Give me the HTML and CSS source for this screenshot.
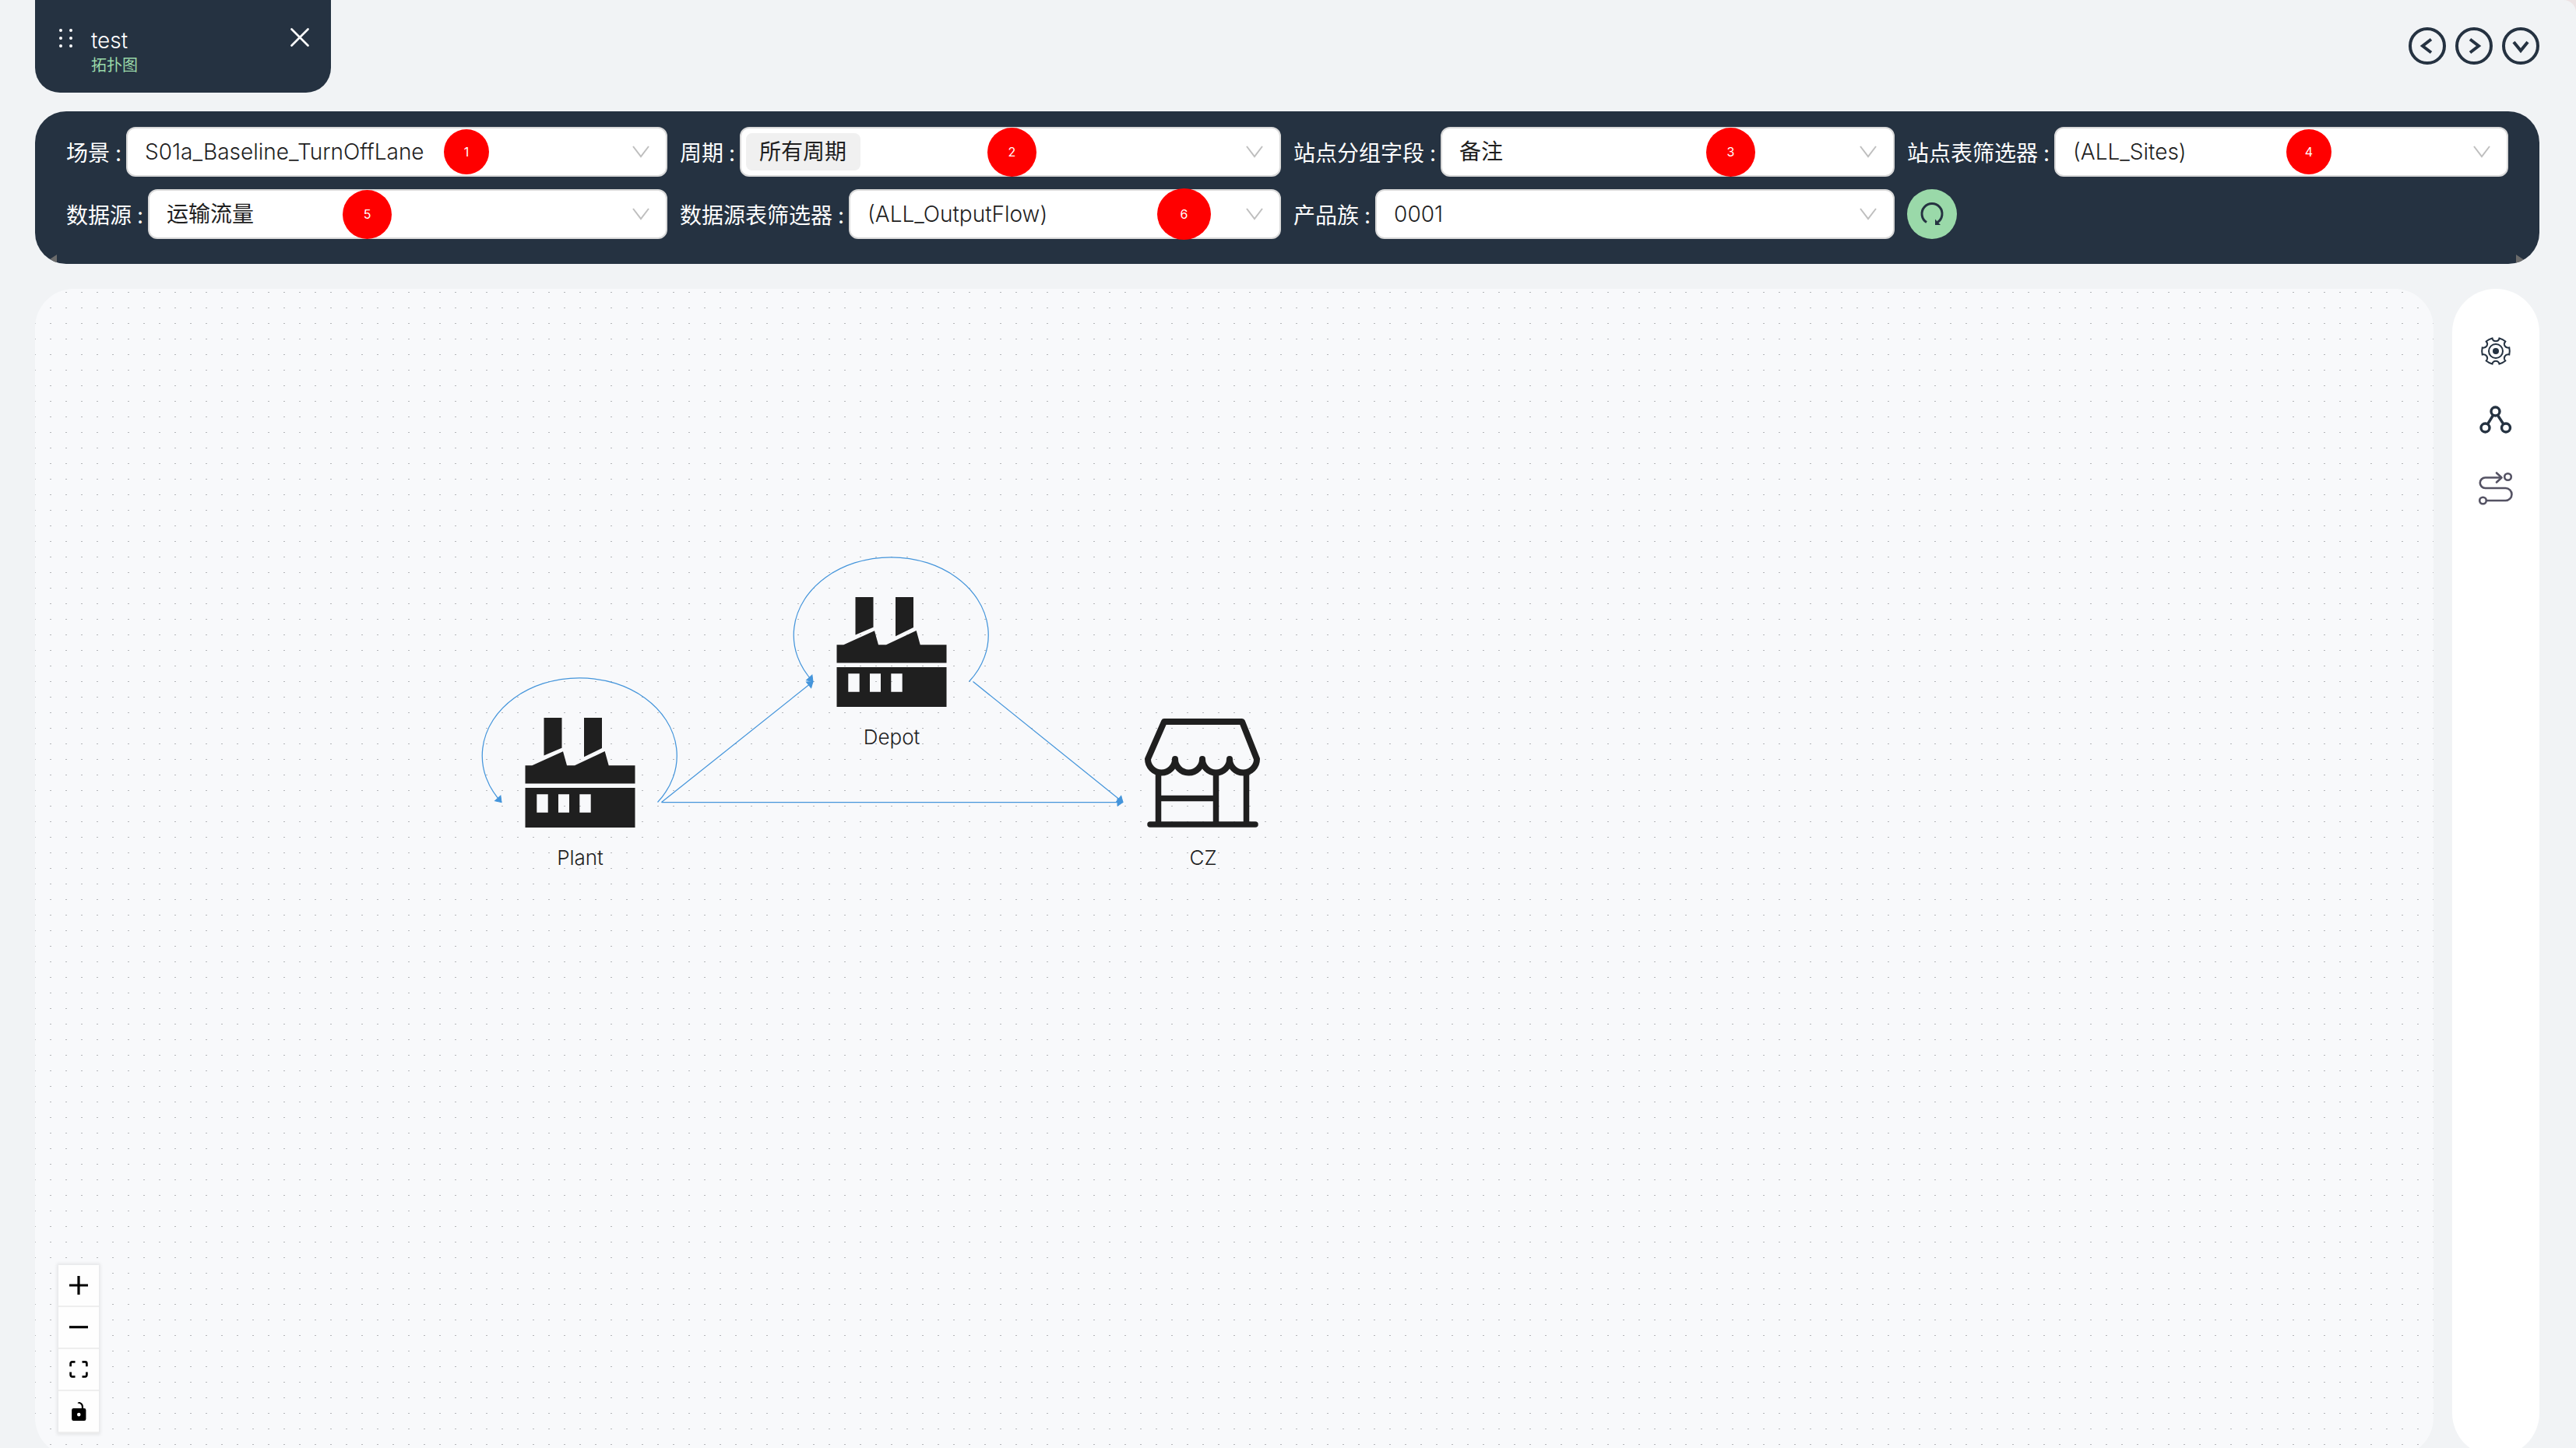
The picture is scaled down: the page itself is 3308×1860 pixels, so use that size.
FILE: index.html
```
<!DOCTYPE html>
<html lang="zh-CN">
<head>
    <meta charset="UTF-8">
    <title>test - 拓扑图</title>
    <link rel="stylesheet" href="styles.css">
</head>
<body>
    <div class="app">
        <header class="header">
            <div class="tab">
                <svg class="tab-drag" viewBox="0 0 20 26" width="20" height="26" fill="#fff">
                    <circle cx="3" cy="3" r="2"/><circle cx="16" cy="3" r="2"/>
                    <circle cx="3" cy="13" r="2"/><circle cx="16" cy="13" r="2"/>
                    <circle cx="3" cy="23" r="2"/><circle cx="16" cy="23" r="2"/>
                </svg>
                <div class="tab-text">
                    <div class="tab-title">test</div>
                    <div class="tab-sub">拓扑图</div>
                </div>
                <button class="tab-close" aria-label="关闭">
                    <svg viewBox="0 0 24 24" width="24" height="24" fill="none" stroke="#fff" stroke-width="2.6" stroke-linecap="round"><path d="M1.5 1.5 22.5 22.5M22.5 1.5 1.5 22.5"/></svg>
                </button>
            </div>
            <nav class="nav">
                <button aria-label="上一个"><svg viewBox="0 0 48 48" width="48" height="48"><circle cx="24" cy="24" r="22"/><path d="M29 15.5 18 24l11 8.5"/></svg></button>
                <button aria-label="下一个"><svg viewBox="0 0 48 48" width="48" height="48"><circle cx="24" cy="24" r="22"/><path d="M19 15.5 30 24l-11 8.5"/></svg></button>
                <button aria-label="展开"><svg viewBox="0 0 48 48" width="48" height="48"><circle cx="24" cy="24" r="22"/><path d="M15 19l9 11 9-11"/></svg></button>
            </nav>
        </header>

        <section class="toolbar">
            <div class="field">
                <label for="scene">场景</label>
                <div class="box">
                    <select id="scene"><option>S01a_Baseline_TurnOffLane</option></select>
                    <svg class="arrow" viewBox="0 0 24 24"><path d="M2 5l10 13L22 5"/></svg>
                </div>
                <span class="badge b1">1</span>
            </div>
            <div class="field">
                <label for="period">周期</label>
                <div class="box box-tag">
                    <select id="period" class="zh"><option>所有周期</option></select>
                    <svg class="arrow" viewBox="0 0 24 24"><path d="M2 5l10 13L22 5"/></svg>
                </div>
                <span class="badge b2">2</span>
            </div>
            <div class="field">
                <label for="group">站点分组字段</label>
                <div class="box">
                    <select id="group" class="zh"><option>备注</option></select>
                    <svg class="arrow" viewBox="0 0 24 24"><path d="M2 5l10 13L22 5"/></svg>
                </div>
                <span class="badge b3">3</span>
            </div>
            <div class="field">
                <label for="sites">站点表筛选器</label>
                <div class="box">
                    <select id="sites"><option>(ALL_Sites)</option></select>
                    <svg class="arrow" viewBox="0 0 24 24"><path d="M2 5l10 13L22 5"/></svg>
                </div>
                <span class="badge b4">4</span>
            </div>
            <div class="field">
                <label for="source">数据源</label>
                <div class="box">
                    <select id="source" class="zh"><option>运输流量</option></select>
                    <svg class="arrow" viewBox="0 0 24 24"><path d="M2 5l10 13L22 5"/></svg>
                </div>
                <span class="badge b5">5</span>
            </div>
            <div class="field">
                <label for="filter">数据源表筛选器</label>
                <div class="box">
                    <select id="filter"><option>(ALL_OutputFlow)</option></select>
                    <svg class="arrow" viewBox="0 0 24 24"><path d="M2 5l10 13L22 5"/></svg>
                </div>
                <span class="badge b6">6</span>
            </div>
            <div class="field">
                <label for="family">产品族</label>
                <div class="box">
                    <select id="family"><option>0001</option></select>
                    <svg class="arrow" viewBox="0 0 24 24"><path d="M2 5l10 13L22 5"/></svg>
                </div>
            </div>
            <button class="refresh" aria-label="刷新">
                <svg viewBox="0 0 32 32" width="32" height="32"><path d="M9 26.500A13 13 0 1 1 23 26.500" fill="none" stroke="#253241" stroke-width="3"/><path d="M20 22.500V30h7z" fill="#253241"/></svg>
            </button>
            <i class="scroll-left"></i>
            <i class="scroll-right"></i>
        </section>

        <main class="main">
            <div class="canvas">
                <svg class="edges">
                    <defs>
                        <pattern id="dots" x="19" y="4" width="20" height="20" patternUnits="userSpaceOnUse">
                            <rect width="2" height="1" fill="#b4b6b9"/>
                        </pattern>
                        <marker id="tip" markerUnits="userSpaceOnUse" markerWidth="14" markerHeight="16" refX="8" refY="7" orient="auto">
                            <path d="M1 2 8 7 1 12z" fill="#4495db" stroke="#4495db"/>
                        </marker>
                    </defs>
                    <rect width="100%" height="100%" fill="url(#dots)"/>
                    <g fill="none" stroke="#4495db" stroke-width="1.25">
                        <path d="M799.500 659.500A125 100 0 1 0 599 659.500" marker-end="url(#tip)"/>
                        <path d="M1199.500 504.500A125 100 0 1 0 999 504.500" marker-end="url(#tip)"/>
                        <path d="M804.500 659.500 999 504.500" marker-end="url(#tip)"/>
                        <path d="M804.500 659.500H1397" marker-end="url(#tip)"/>
                        <path d="M1204.500 504.500 1397 659.500" marker-end="url(#tip)"/>
                    </g>
                </svg>

                <div class="node plant">
                    <svg viewBox="0 0 160 142" width="160" height="142" fill="#1f1f1f">
                        <path d="M33.500 0h23v38.700l-23 9.800zM85 0h23v39L85 50.300z"/>
                        <path d="M9.500 61.300h8.800L58 43.300l5 18h10L111.700 43l5 18.300h33.800v23.200H9.500z"/>
                        <path fill-rule="evenodd" d="M9.500 90h141v51H9.500zM24.300 98.300v23.400h14.400V98.300zM52 98.300v23.400h14V98.300zM79.300 98.300v23.400h14.400V98.300z"/>
                    </svg>
                    <span>Plant</span>
                </div>
                <div class="node depot">
                    <svg viewBox="0 0 160 142" width="160" height="142" fill="#1f1f1f">
                        <path d="M33.500 0h23v38.700l-23 9.800zM85 0h23v39L85 50.300z"/>
                        <path d="M9.500 61.300h8.800L58 43.300l5 18h10L111.700 43l5 18.300h33.800v23.200H9.500z"/>
                        <path fill-rule="evenodd" d="M9.500 90h141v51H9.500zM24.300 98.300v23.400h14.400V98.300zM52 98.300v23.400h14V98.300zM79.300 98.300v23.400h14.400V98.300z"/>
                    </svg>
                    <span>Depot</span>
                </div>
                <div class="node cz">
                    <svg viewBox="0 0 160 142" width="160" height="142" fill="none" stroke="#1f1f1f" stroke-width="8" stroke-linecap="round" stroke-linejoin="round">
                        <path d="M9 53 30 5h100l19 48a17.500 17.500 0 0 1-35 0 17.500 17.500 0 0 1-35 0 17.500 17.500 0 0 1-35 0 17.500 17.500 0 0 1-35 0z"/>
                        <path d="M22.500 71v65M96.500 71v65M135.500 71v65M22.500 103.500h74M12 137h135" stroke-width="7.500"/>
                    </svg>
                    <span>CZ</span>
                </div>

                <div class="controls">
                    <button aria-label="放大"><svg viewBox="0 0 32 32" width="24" height="24"><path d="M32 18.133H18.133V32h-4.266V18.133H0v-4.266h13.867V0h4.266v13.867H32z"/></svg></button>
                    <button aria-label="缩小"><svg viewBox="0 0 32 5" width="24" height="4"><path d="M0 0h32v4.200H0z"/></svg></button>
                    <button aria-label="适应画布"><svg viewBox="0 0 32 30" width="24" height="22"><path d="M3.692 4.630c0-.530.400-.938.939-.938h5.215V0H4.708C2.130 0 0 2.054 0 4.630v5.216h3.692V4.631zM27.354 0h-5.200v3.692h5.170c.530 0 .984.400.984.939v5.215H32V4.631A4.624 4.624 0 0027.354 0zm.954 24.830c0 .532-.400.940-.939.940h-5.215v3.768h5.215c2.577 0 4.631-2.130 4.631-4.707v-5.139h-3.692v5.139zm-23.677.940c-.531 0-.939-.400-.939-.940v-5.138H0v5.139c0 2.577 2.130 4.707 4.708 4.707h5.138V25.770H4.631z"/></svg></button>
                    <button aria-label="锁定"><svg viewBox="0 0 25 32" width="19" height="24"><path d="M21.333 10.667H19.810V7.619C19.810 3.429 16.380 0 12.190 0c-4.114 1.828-1.370 2.133.305 2.438 1.676.305 4.420 2.590 4.420 5.181v3.048H3.047A3.056 3.056 0 000 13.714v15.238A3.056 3.056 0 003.048 32h18.285a3.056 3.056 0 003.048-3.048V13.714a3.056 3.056 0 00-3.048-3.047zM12.190 24.533a3.056 3.056 0 01-3.047-3.047 3.056 3.056 0 013.047-3.048 3.056 3.056 0 013.048 3.048 3.056 3.056 0 01-3.048 3.047z"/></svg></button>
                </div>
            </div>

            <aside class="side">
                <button aria-label="设置">
                    <svg viewBox="0 0 44 44" width="44" height="44" fill="none" stroke="#253241" stroke-width="2">
                        <path d="M17.500 5.500C18.500 10.500 25.500 10.500 26.500 5.500Q31 6.800 34.300 9.500C31 13.500 34 18.500 39.300 17.500Q40.300 22 39.300 26.500C34 25.500 31 30.500 34.300 34.500Q31 37.200 26.500 38.500C25.500 33.500 18.500 33.500 17.500 38.500Q13 37.200 9.700 34.500C13 30.500 10 25.500 4.700 26.500Q3.700 22 4.700 17.500C10 18.500 13 13.500 9.700 9.500Q13 6.800 17.500 5.500z"/>
                        <circle cx="22" cy="22" r="9"/>
                        <circle cx="22" cy="22" r="4" fill="#253241" stroke="none"/>
                    </svg>
                </button>
                <button aria-label="网络">
                    <svg viewBox="0 0 44 44" width="44" height="44" fill="none" stroke="#253241" stroke-width="3.400">
                        <circle cx="21.500" cy="11.500" r="5.500"/>
                        <circle cx="8.500" cy="32.500" r="5.500"/>
                        <circle cx="35" cy="32.500" r="5.500"/>
                        <path d="M18.500 16.500 11.700 27.500M24.500 16.500 31.700 27.500"/>
                    </svg>
                </button>
                <button aria-label="路径">
                    <svg viewBox="0 0 44 44" width="44" height="44" fill="none" stroke="#545263" stroke-width="2.600" stroke-linecap="round" stroke-linejoin="round">
                        <path d="M28 8.500H8.500a6.750 6.750 0 0 0 0 13.500h26a8 8 0 0 1 0 16H11"/>
                        <path d="M23 2.500 29.500 8.500 23 14.500"/>
                        <circle cx="37.500" cy="7.500" r="4.300"/>
                        <circle cx="5.500" cy="38" r="4.300"/>
                    </svg>
                </button>
            </aside>
        </main>
    </div>
</body>
</html>
```
FILE: styles.css
```
* {
    box-sizing: border-box;
}
body {
    margin: 0;
    height: 100vh;
    overflow: hidden;
    background-color: #ece3e4;
    font-family: Inter, "Noto Sans CJK SC", sans-serif;
    font-size: 28px;
    font-weight: 300;
    color: #1f1f1f;
}
button {
    display: flex;
    align-items: center;
    justify-content: center;
    padding: 0;
    border: none;
    background: none;
    cursor: pointer;
}
.app {
    display: flex;
    flex-direction: column;
    height: calc(100vh + 11px);
    padding: 0 47px 0 45px;
    background-color: #f1f3f5;
    border-top-right-radius: 16px;
}

/* header */
.header {
    display: flex;
    justify-content: space-between;
    align-items: flex-start;
    margin-bottom: 24px;
}
.tab {
    display: flex;
    align-items: flex-start;
    width: 380px;
    height: 119px;
    padding: 36px 28px 0 30px;
    background-color: #253241;
    border-radius: 0 0 32px 32px;
}
.tab-text {
    flex: 1;
    margin-left: 22px;
}
.tab-title {
    color: white;
    line-height: 32px;
}
.tab-sub {
    color: #9ad9a9;
    font-size: 20px;
    font-weight: 400;
    line-height: 32px;
}
.nav {
    display: flex;
    gap: 12px;
    padding-top: 35px;
}
.nav svg {
    fill: none;
    stroke: #253241;
    stroke-width: 4;
}

/* toolbar */
.toolbar {
    position: relative;
    display: grid;
    grid-template-columns: repeat(4, 1fr);
    gap: 16px;
    padding: 20px 40px 32px;
    margin-bottom: 32px;
    background-color: #253241;
    border-radius: 40px;
    overflow: hidden;
}
.field {
    position: relative;
    display: flex;
    align-items: center;
}
.field label {
    color: white;
    font-weight: 400;
    white-space: nowrap;
    margin-right: 6px;
}
.field label::after {
    content: ":";
    margin-left: 7px;
}
.box {
    position: relative;
    display: flex;
    align-items: center;
    flex: 1;
    height: 64px;
    background-color: white;
    border: 2px solid #d9d9d9;
    border-radius: 12px;
}
.box select {
    appearance: none;
    width: 100%;
    height: 48px;
    padding: 0 22px;
    border: none;
    background: none;
    color: #1f1f1f;
    font: inherit;
}
.box .zh {
    font-weight: 400;
}
.box-tag select {
    width: auto;
    margin-left: 6px;
    padding: 0 17px;
    background-color: #f0f0f0;
    border-radius: 8px;
}
.arrow {
    position: absolute;
    right: 20px;
    width: 24px;
    height: 24px;
    fill: none;
    stroke: #bfbfbf;
    stroke-width: 2;
    pointer-events: none;
}
.badge {
    position: absolute;
    display: flex;
    align-items: center;
    justify-content: center;
    width: 63px;
    height: 63px;
    border-radius: 50%;
    background-color: red;
    color: white;
    font-size: 16px;
    font-weight: 400;
}
.b1, .b4 {
    width: 58px;
    height: 58px;
}
.b6 {
    width: 69px;
    height: 66px;
}
.b1 { left: 485px; }
.b2 { left: 395px; }
.b3 { left: 530px; }
.b4 { left: 487px; }
.b5 { left: 355px; }
.b6 { left: 613px; }
.refresh {
    width: 64px;
    height: 64px;
    border-radius: 50%;
    background-color: #9ad9a9;
}
.scroll-left, .scroll-right {
    position: absolute;
    bottom: 0;
    border: 8px solid transparent;
    border-bottom-width: 4px;
}
.scroll-left {
    left: 16px;
    border-left: none;
    border-right: 12px solid #6b6b6b;
}
.scroll-right {
    right: 18px;
    border-right: none;
    border-left: 12px solid #6b6b6b;
}

/* canvas */
.main {
    flex: 1;
    display: flex;
    gap: 24px;
    min-height: 0;
}
.canvas {
    position: relative;
    flex: 1;
    background-color: #f8f9fb;
    border-radius: 50px;
    overflow: hidden;
}
.edges {
    position: absolute;
    width: 100%;
    height: 100%;
}
.node {
    position: absolute;
    display: flex;
    flex-direction: column;
    align-items: center;
    gap: 22px;
    width: 200px;
    font-size: 26px;
    line-height: 32px;
}
.plant {
    left: 600px;
    top: 551px;
}
.depot {
    left: 1000px;
    top: 396px;
}
.cz {
    left: 1400px;
    top: 551px;
}
.controls {
    position: absolute;
    left: 30px;
    bottom: 30px;
    box-shadow: 0 0 4px 2px rgba(0, 0, 0, 0.08);
}
.controls button {
    width: 52px;
    height: 54px;
    background-color: #fefefe;
    border-bottom: 2px solid #eee;
}
.side {
    display: flex;
    flex-direction: column;
    align-items: center;
    gap: 44px;
    width: 112px;
    padding-top: 58px;
    background-color: white;
    border-radius: 56px;
}
```
